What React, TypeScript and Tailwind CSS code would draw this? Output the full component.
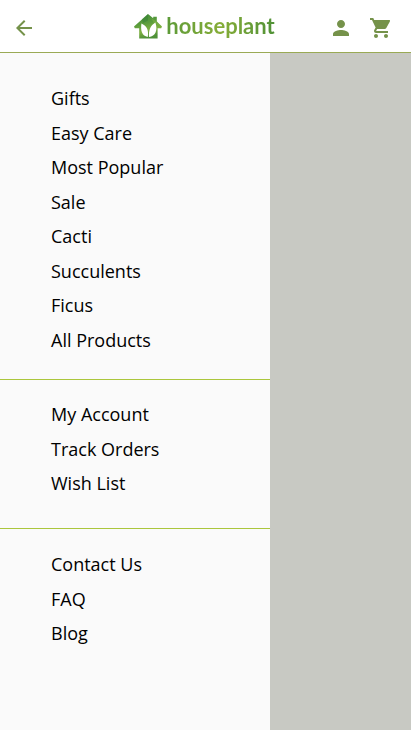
import React from "react";
import { MdArrowBack, MdPerson, MdShoppingCart } from "react-icons/md";

const groups = [
  {
    label: "Products",
    box: "pt-[33px] pb-[27px]",
    list: "h-[266px]",
    items: ["Gifts", "Easy Care", "Most Popular", "Sale", "Cacti", "Succulents", "Ficus", "All Products"],
  },
  {
    label: "Account",
    box: "border-t border-[#abc63c] pt-[22px] pb-[33px]",
    list: "h-[93px]",
    items: ["My Account", "Track Orders", "Wish List"],
  },
  {
    label: "Help",
    box: "border-t border-[#abc63c] pt-[23px] pb-[33px]",
    list: "h-[93px]",
    items: ["Contact Us", "FAQ", "Blog"],
  },
];

function HouseMark() {
  return (
    <svg viewBox="0 0 28 25" className="h-[25px] w-[28px]" aria-hidden="true">
      <defs>
        <linearGradient id="roof" x1="0" y1="0" x2="0.3" y2="1">
          <stop offset="0" stopColor="#3f8a38" />
          <stop offset="0.45" stopColor="#5a9c3c" />
          <stop offset="0.75" stopColor="#7fb040" />
          <stop offset="1" stopColor="#4f9138" />
        </linearGradient>
      </defs>
      <path
        fill="url(#roof)"
        d="M14 0 19.2 4.2V2.8H22.8V7.4L28 12.6 27.2 14.2H23.6V24.6H5.2V14.2H.8L0 12.6Z"
      />
      <path d="M14 0 8 5.2 9 9 14 6.5Z" fill="#2f7a35" opacity=".4" />
      <path d="M17 4 22.8 7.4 26 12 20 9Z" fill="#8dbb45" opacity=".4" />
      <path
        fill="#fff"
        d="M13.8 23C8 22 6.4 17 7.4 9.6 12.4 12 15 15.6 13.8 23ZM15 23C14.6 16 16.4 11.4 21.4 8.4 24 16.4 21.4 22 15 23Z"
      />
    </svg>
  );
}

export default function App() {
  return (
    <div className="flex min-h-screen flex-col bg-white pb-px font-['Open_Sans','Noto_Sans',sans-serif] text-black">
      <header className="grid h-[53px] grid-cols-[1fr_auto_1fr] items-center border-b border-[#9aaa55] bg-white px-3 pt-1 text-[#75924a]">
        <button type="button" aria-label="Back" className="flex size-6 items-center justify-center">
          <MdArrowBack size={24} />
        </button>
        <a href="#home" aria-label="houseplant" className="-mt-1 flex items-center gap-1 pr-0.5">
          <HouseMark />
          <span className="bg-linear-to-r from-[#5c9a38] via-[#86ad38] to-[#4f9136] bg-clip-text font-['Lato',sans-serif] text-[22px] leading-8 font-bold text-transparent">
            houseplant
          </span>
        </a>
        <div className="flex items-center justify-end gap-4 pr-1.5">
          <button type="button" aria-label="Account" className="flex size-6 items-center justify-center">
            <MdPerson size={24} />
          </button>
          <button type="button" aria-label="Cart" className="flex size-6 items-center justify-center">
            <MdShoppingCart size={24} />
          </button>
        </div>
      </header>
      <main className="flex flex-1 bg-[#c8c9c3]">
        <nav className="w-[270px] bg-[#fafafa]">
          {groups.map((group) => (
            <div key={group.label} className={group.box}>
              <ul aria-label={group.label} className={`flex flex-col justify-between ${group.list}`}>
                {group.items.map((item) => (
                  <li key={item} className="pl-[51px] text-[18px] leading-6">
                    <a href="#menu">{item}</a>
                  </li>
                ))}
              </ul>
            </div>
          ))}
        </nav>
      </main>
    </div>
  );
}
